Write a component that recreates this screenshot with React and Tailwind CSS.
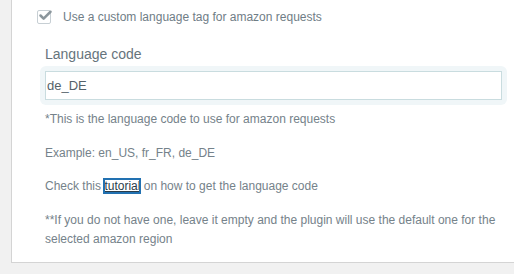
import { Check } from "lucide-react";

export default function App() {
    return (
        <div
            className="w-[514px] h-[274px] overflow-hidden bg-[#f1f1f1] pl-[11px]"
            style={{ fontFamily: '"Liberation Sans", Arial, sans-serif' }}
        >
            <div className="w-[520px] h-[263px] bg-white border-l border-b border-[#d4d4d4] pl-[25px] pt-[9px] text-[#75828a]">
                <label className="flex items-center gap-[12px] h-[16px]">
                    <span className="relative w-[14px] h-[14px] rounded-[2px] border border-[#c7cfd4] bg-white">
                        <Check
                            size={15}
                            strokeWidth={4}
                            className="absolute -top-[3px] left-0 text-[#8b969c]"
                        />
                    </span>
                    <span className="text-[12px] text-[#6f7d86]">
                        Use a custom language tag for amazon requests
                    </span>
                </label>

                <div className="pl-[3px] pr-[24px]">
                    <div className="mt-[20px] text-[14px] leading-[18px] text-[#66747c] pl-[5px]">
                        Language code
                    </div>
                    <div className="mt-[3px] rounded-[6px] bg-[#f0f6f8] p-[5px]">
                        <input
                            defaultValue="de_DE"
                            className="w-full h-[29px] border border-[#c9dcdf] bg-white px-[1px] text-[13px] text-[#55626a] outline-none"
                            style={{ fontFamily: '"Liberation Sans", Arial, sans-serif' }}
                        />
                    </div>

                    <div className="pl-[5px] text-[12px] leading-[19px]">
                        <p className="mt-[5px]">
                            *This is the language code to use for amazon requests
                        </p>
                        <p className="mt-[15px]">Example: en_US, fr_FR, de_DE</p>
                        <p className="mt-[14px]">
                            Check this{" "}
                            <a
                                href="#"
                                className="text-[#2b3d4a] underline outline-2 outline-[#2271b1] -outline-offset-1"
                            >
                                tutorial
                            </a>{" "}
                            on how to get the language code
                        </p>
                        <p className="mt-[15px] pr-[6px]">
                            **If you do not have one, leave it empty and the
                            plugin will use the default one for the selected
                            amazon region
                        </p>
                    </div>
                </div>
            </div>
        </div>
    );
}
